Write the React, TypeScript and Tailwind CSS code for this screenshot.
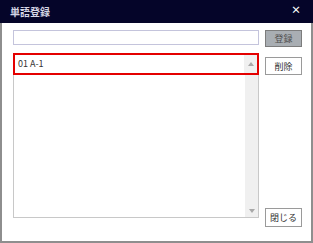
const jp = { fontFamily: '"Noto Sans CJK JP", "Noto Sans", sans-serif' };

const App = () => {
  return (
    <div className="flex h-[243px] w-[313px] flex-col bg-white" style={jp}>
      <div className="flex h-[23px] items-center justify-between bg-[#050529] pl-[10px] pr-[12px]">
        <span className="text-[10px] leading-none font-bold text-[#d4d4e4]">単語登録</span>
        <span className="mb-[4px] text-[10px] leading-none font-bold text-white">×</span>
      </div>

      <div className="flex flex-1 gap-[6px] border-x-2 border-b-2 border-[#8e8e8e] pt-[7px] pr-[8px] pb-[14px] pl-[11px]">
        <div className="mb-[9px] flex w-[246px] flex-col gap-[8px]">
          <input
            className="h-[15px] w-full border border-[#c4c4dc] bg-white px-1 text-[9px] outline-none"
            defaultValue=""
          />
          <div className="flex flex-1 flex-col border-x border-b border-[#c8c8c8]">
            <div className="-mx-[1px] flex h-[22px] border-2 border-[#e40000]">
              <span className="flex flex-1 items-center pl-[3px] text-[9px] text-[#333]">01 A-1</span>
              <div className="flex w-[13px] items-center justify-center bg-[#f0f0f0]">
                <span className="h-0 w-0 border-x-[3px] border-b-[4px] border-x-transparent border-b-[#a8a8a8]" />
              </div>
            </div>
            <div className="flex flex-1">
              <div className="flex-1" />
              <div className="flex w-[13px] flex-col items-center justify-end bg-[#f0f0f0] pb-[4px]">
                <span className="h-0 w-0 border-x-[3px] border-t-[4px] border-x-transparent border-t-[#a8a8a8]" />
              </div>
            </div>
          </div>
        </div>

        <div className="flex w-[37px] flex-col">
          <button className="h-[17px] border border-[#7c7c7c] bg-[#a9aeb3] text-[9px] leading-none text-[#505050]">
            登録
          </button>
          <button className="mt-[10px] h-[18px] border border-[#9a9a9a] bg-white text-[9px] leading-none text-[#333]">
            削除
          </button>
          <button className="mt-auto h-[19px] border border-[#9a9a9a] bg-white text-[9px] leading-none text-[#333]">
            閉じる
          </button>
        </div>
      </div>
    </div>
  );
};

export default App;
